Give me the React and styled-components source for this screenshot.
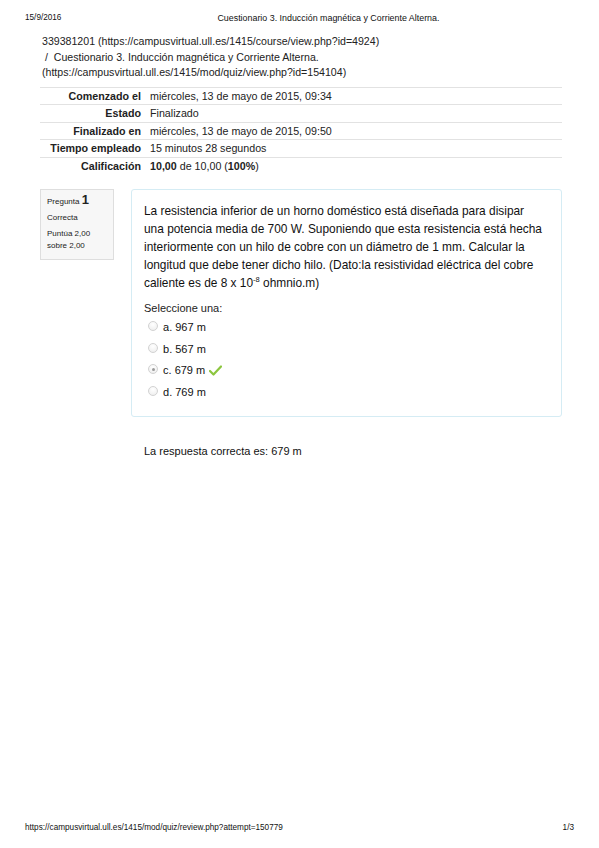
import React from 'react';
import styled, { createGlobalStyle } from 'styled-components';

const GlobalStyle = createGlobalStyle`
  html, body {
    margin: 0;
    padding: 0;
    background: #fff;
  }
  body {
    font-family: "Liberation Sans", Arial, Helvetica, sans-serif;
    color: #222;
  }
`;

const Page = styled.div`
  width: 599px;
  height: 848px;
  display: flex;
  flex-direction: column;
  overflow: hidden;
`;

const PrintBar = styled.div`
  display: flex;
  justify-content: space-between;
  align-items: center;
  padding: ${p => (p.$bottom ? '0 25px 15px 25px' : '13px 25px 0 25px')};
  font-size: 8.2px;
  line-height: 10px;
  color: #111;
`;

const PrintTitle = styled.span`
  flex: 1;
  padding-left: 156px;
  font-size: 8.9px;
`;

const Main = styled.div`
  flex: 1;
  padding: 0 37px 0 40px;
`;

const Breadcrumb = styled.div`
  margin: 11px 0 0 2px;
  font-size: 10.6px;
  line-height: 15.5px;
  color: #222;
`;

const Summary = styled.div`
  margin-top: 6px;
  display: flex;
  flex-direction: column;
`;

const SummaryRow = styled.div`
  box-sizing: border-box;
  display: grid;
  grid-template-columns: 101px 1fr;
  gap: 9px;
  height: 17.5px;
  align-items: center;
  border-top: 1.5px solid #e2e2e2;
  font-size: 10.7px;
`;

const SummaryLabel = styled.span`
  text-align: right;
  font-weight: bold;
`;

const Question = styled.div`
  margin-top: 15px;
  display: grid;
  grid-template-columns: 74px 1fr;
  gap: 17px;
  align-items: start;
`;

const Info = styled.div`
  border: 1px solid #dedede;
  background: #f7f7f7;
  padding: 4px 5px 7px 6px;
  font-size: 8px;
  color: #222;
`;

const InfoLine = styled.div`
  line-height: 12px;
  margin-top: ${p => p.$gap || 0}px;
`;

const QNumber = styled.span`
  font-size: 13px;
  font-weight: bold;
`;

const Content = styled.div`
  display: flex;
  flex-direction: column;
`;

const Formulation = styled.div`
  border: 1.5px solid #d5ecf4;
  border-radius: 3px;
  background: #fff;
  padding: 12px 12px 14px 12px;
  height: 228px;
  box-sizing: border-box;
`;

const QText = styled.p`
  margin: 0;
  font-size: 11.9px;
  line-height: 18px;
  color: #111;
  white-space: nowrap;

  sup {
    font-size: 7.5px;
    line-height: 0;
    vertical-align: 5px;
  }
`;

const Prompt = styled.div`
  margin-top: 9px;
  font-size: 11px;
  line-height: 15px;
`;

const Options = styled.div`
  display: flex;
  flex-direction: column;
`;

const Option = styled.label`
  display: flex;
  align-items: center;
  gap: 5px;
  height: 21.7px;
  padding-left: 4px;
  font-size: 11px;
  color: #111;
`;

const Radio = styled.span`
  width: 8px;
  height: 8px;
  border-radius: 50%;
  border: 1px solid #d2d2d2;
  background: radial-gradient(circle at 50% 30%, #ffffff 0%, #ececec 100%);
  display: flex;
  align-items: center;
  justify-content: center;
  margin-top: -2px;

  &::after {
    content: '';
    width: 3px;
    height: 3px;
    border-radius: 50%;
    background: ${p => (p.$checked ? '#9a9a9a' : 'transparent')};
  }
`;

const Answer = styled.div`
  margin-top: 27px;
  padding-left: 13px;
  font-size: 11px;
  line-height: 15px;
  color: #111;
`;

const Check = () => (
  <svg width="13" height="11" viewBox="0 0 13 11" style={{ marginLeft: -1 }}>
    <path d="M1 6 L4.5 9.5 L12 1.5" fill="none" stroke="#8cc63f" strokeWidth="2.2" strokeLinecap="round" strokeLinejoin="round" />
  </svg>
);

const summary = [
  ['Comenzado el', 'miércoles, 13 de mayo de 2015, 09:34'],
  ['Estado', 'Finalizado'],
  ['Finalizado en', 'miércoles, 13 de mayo de 2015, 09:50'],
  ['Tiempo empleado', '15 minutos 28 segundos'],
  ['Calificación', <><b>10,00</b> de 10,00 (<b>100%</b>)</>],
];

const options = [
  { key: 'a', text: '967 m' },
  { key: 'b', text: '567 m' },
  { key: 'c', text: '679 m', checked: true },
  { key: 'd', text: '769 m' },
];

const App = () => (
  <>
    <GlobalStyle />
    <Page>
      <PrintBar>
        <span>15/9/2016</span>
        <PrintTitle>Cuestionario 3. Inducción magnética y Corriente Alterna.</PrintTitle>
      </PrintBar>
      <Main>
        <Breadcrumb>
          339381201 (https://campusvirtual.ull.es/1415/course/view.php?id=4924)
          <br />
          &nbsp;/&nbsp; Cuestionario 3. Inducción magnética y Corriente Alterna.
          <br />
          (https://campusvirtual.ull.es/1415/mod/quiz/view.php?id=154104)
        </Breadcrumb>
        <Summary>
          {summary.map(([label, value]) => (
            <SummaryRow key={label}>
              <SummaryLabel>{label}</SummaryLabel>
              <span>{value}</span>
            </SummaryRow>
          ))}
        </Summary>
        <Question>
          <Info>
            <InfoLine>Pregunta <QNumber>1</QNumber></InfoLine>
            <InfoLine $gap={4}>Correcta</InfoLine>
            <InfoLine $gap={4}>Puntúa 2,00</InfoLine>
            <InfoLine>sobre 2,00</InfoLine>
          </Info>
          <Content>
            <Formulation>
              <QText>
                La resistencia inferior de un horno doméstico está diseñada para disipar
                <br />
                una potencia media de 700 W. Suponiendo que esta resistencia está hecha
                <br />
                interiormente con un hilo de cobre con un diámetro de 1 mm. Calcular la
                <br />
                longitud que debe tener dicho hilo. (Dato:la resistividad eléctrica del cobre
                <br />
                caliente es de 8 x 10<sup>-8</sup> ohmnio.m)
              </QText>
              <Prompt>Seleccione una:</Prompt>
              <Options>
                {options.map(o => (
                  <Option key={o.key}>
                    <Radio $checked={o.checked} />
                    <span>{o.key}. {o.text}</span>
                    {o.checked && <Check />}
                  </Option>
                ))}
              </Options>
            </Formulation>
            <Answer>La respuesta correcta es: 679 m</Answer>
          </Content>
        </Question>
      </Main>
      <PrintBar $bottom>
        <span>https://campusvirtual.ull.es/1415/mod/quiz/review.php?attempt=150779</span>
        <span>1/3</span>
      </PrintBar>
    </Page>
  </>
);

export default App;
